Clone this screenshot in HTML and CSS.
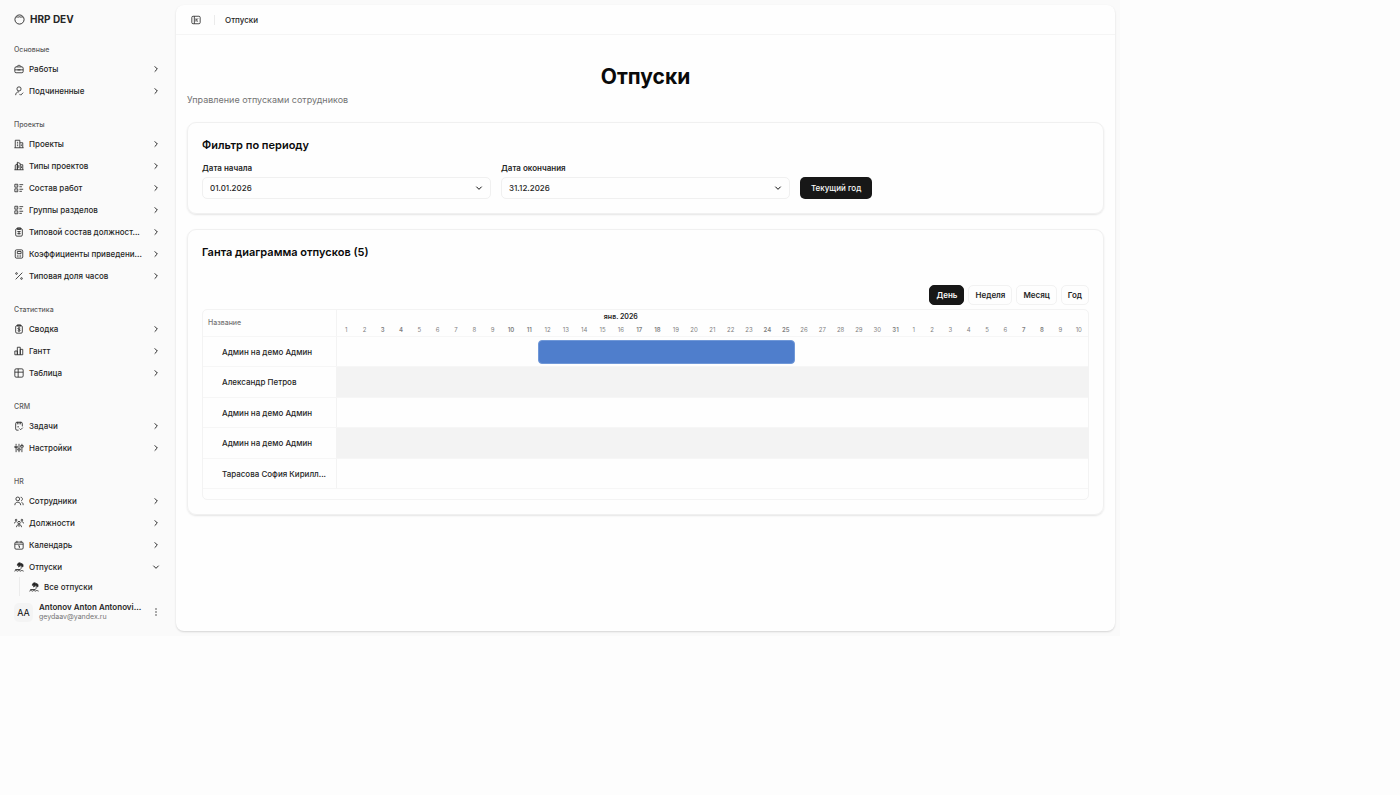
FILE: index.html
```html
<!DOCTYPE html>
<html lang="ru">
<head>
<meta charset="utf-8">
<title>Отпуски</title>
<link rel="stylesheet" href="styles.css">
</head>
<body>
<svg class="sprite" aria-hidden="true">
  <symbol id="i-logo" viewBox="0 0 24 24"><circle cx="12" cy="12" r="10"/><path d="M5 7c2.500-1.500 4 .8 7-1 3 1.800 4.500-.5 7 1"/></symbol>
  <symbol id="i-right" viewBox="0 0 24 24"><path d="M8 4l8 8-8 8"/></symbol>
  <symbol id="i-down" viewBox="0 0 24 24"><path d="M4 8l8 8 8-8"/></symbol>
  <symbol id="i-briefcase" viewBox="0 0 24 24"><rect x="2" y="7" width="20" height="14" rx="3"/><path d="M7 7c0-5 10-5 10 0M2 14h20M10 12v4M14 12v4"/></symbol>
  <symbol id="i-user" viewBox="0 0 24 24"><circle cx="12" cy="7" r="5"/><path d="M4 22c0-5 3-8 8-8M13 19l3 3 6-6"/></symbol>
  <symbol id="i-building" viewBox="0 0 24 24"><path d="M1 21h22M3 21V3h11v18M14 9h7v12M7 8h3M7 12h3M7 16h3M17.500 13v4"/></symbol>
  <symbol id="i-building2" viewBox="0 0 24 24"><path d="M1 21h22M3 21V10l5-3v14M8 21V3l7 3v15M15 9h6v12M11.500 10v7M18 13v4"/></symbol>
  <symbol id="i-list" viewBox="0 0 24 24"><path d="M2 3h7v7H2zM2 14h7v7H2zM13 4h9M13 9h6M13 15h9M13 20h6M5 6.500h1M5 17.500h1"/></symbol>
  <symbol id="i-clip" viewBox="0 0 24 24"><rect x="4" y="4" width="16" height="18" rx="3"/><path d="M8 2h8v4H8zM8 11h8M8 16h8M12 10v8"/></symbol>
  <symbol id="i-calc" viewBox="0 0 24 24"><rect x="3" y="2" width="18" height="20" rx="3"/><path d="M8 6h9v5H8zM7 15h2M11 15h2M15 15h2M7 18.500h2M11 18.500h2M15 18.500h2"/></symbol>
  <symbol id="i-percent" viewBox="0 0 24 24"><path d="M20 4L4 20"/><circle cx="6" cy="6" r="2"/><circle cx="18" cy="18" r="2"/></symbol>
  <symbol id="i-dollar" viewBox="0 0 24 24"><rect x="4" y="4" width="16" height="18" rx="3"/><path d="M8 2h8v3H8zM15 10c-1-1-6-1-6 1s6 1.500 6 4-5 2-6 1M12 8v11"/></symbol>
  <symbol id="i-chart" viewBox="0 0 24 24"><path d="M2 12h6v9H2zM8 3h7v18H8zM15 8h6v13h-6z"/></symbol>
  <symbol id="i-table" viewBox="0 0 24 24"><rect x="2" y="2" width="20" height="20" rx="3"/><path d="M2 10h20M10 2v20"/></symbol>
  <symbol id="i-task" viewBox="0 0 24 24"><path d="M11 22H7c-2 0-3-1-3-3V6c0-2 1-3 3-3h10c2 0 3 1 3 3v7M8 2v6M12 2v6M16 2v6M13 18l3 3 5-5M8 14h4"/></symbol>
  <symbol id="i-sliders" viewBox="0 0 24 24"><path d="M5 2v4M5 11v11M2 8h6v3H2zM12 2v11M12 18v4M9 14h6v3H9zM19 2v3M19 11v11M16 6h6v4h-6z"/></symbol>
  <symbol id="i-users" viewBox="0 0 24 24"><circle cx="9" cy="7" r="4.500"/><path d="M2 22c0-5 3-7 7-7s7 2 7 7M16 3c5 0 6 7 1 8.500M18 15c3 1 4 3 4 7"/></symbol>
  <symbol id="i-team" viewBox="0 0 24 24"><circle cx="12" cy="11" r="3"/><circle cx="5" cy="5" r="2"/><circle cx="19" cy="5" r="2"/><path d="M6 22c0-4 2-6 6-6s6 2 6 6M1 13c0-3 2-4 5-4M23 13c0-3-2-4-5-4M12 17v4"/></symbol>
  <symbol id="i-calendar" viewBox="0 0 24 24"><rect x="2" y="5" width="20" height="17" rx="3"/><path d="M2 10h20M7 2v5M17 2v5M10 14h3v5"/></symbol>
  <symbol id="i-beach" viewBox="0 0 24 24"><path d="M1 22c2-2 5-2 7 0 2-2 5-2 7 0 2-2 5-2 8 0M3 18h12c3-3 3-6 1-9"/><path class="solid" d="M8 8c0-6 6-8 9-4 4-1 6 4 4 8l-5-4-5 4c0-2 1-3 2-4z"/></symbol>
  <symbol id="i-panel" viewBox="0 0 24 24"><rect x="2" y="3" width="20" height="18" rx="3"/><path d="M8 3v18M12 8v8M17 8l-4 4 4 4"/></symbol>
  <symbol id="i-dots" viewBox="0 0 24 24"><path d="M12 1v4M12 10v4M12 19v4"/></symbol>
</svg>
<div class="app">
  <aside class="sidebar">
    <a class="brand" href="#"><svg class="logo"><use href="#i-logo"/></svg>HRP DEV</a>
    <nav class="nav">
      <section class="group">
        <h2 class="group-label">Основные</h2>
        <button class="item"><svg class="icon"><use href="#i-briefcase"/></svg><span class="item-text">Работы</span><svg class="chevron"><use href="#i-right"/></svg></button>
        <button class="item"><svg class="icon"><use href="#i-user"/></svg><span class="item-text">Подчиненные</span><svg class="chevron"><use href="#i-right"/></svg></button>
      </section>
      <section class="group">
        <h2 class="group-label">Проекты</h2>
        <button class="item"><svg class="icon"><use href="#i-building"/></svg><span class="item-text">Проекты</span><svg class="chevron"><use href="#i-right"/></svg></button>
        <button class="item"><svg class="icon"><use href="#i-building2"/></svg><span class="item-text">Типы проектов</span><svg class="chevron"><use href="#i-right"/></svg></button>
        <button class="item"><svg class="icon"><use href="#i-list"/></svg><span class="item-text">Состав работ</span><svg class="chevron"><use href="#i-right"/></svg></button>
        <button class="item"><svg class="icon"><use href="#i-list"/></svg><span class="item-text">Группы разделов</span><svg class="chevron"><use href="#i-right"/></svg></button>
        <button class="item"><svg class="icon"><use href="#i-clip"/></svg><span class="item-text">Типовой состав должност...</span><svg class="chevron"><use href="#i-right"/></svg></button>
        <button class="item"><svg class="icon"><use href="#i-calc"/></svg><span class="item-text">Коэффициенты приведени...</span><svg class="chevron"><use href="#i-right"/></svg></button>
        <button class="item"><svg class="icon"><use href="#i-percent"/></svg><span class="item-text">Типовая доля часов</span><svg class="chevron"><use href="#i-right"/></svg></button>
      </section>
      <section class="group">
        <h2 class="group-label">Статистика</h2>
        <button class="item"><svg class="icon"><use href="#i-dollar"/></svg><span class="item-text">Сводка</span><svg class="chevron"><use href="#i-right"/></svg></button>
        <button class="item"><svg class="icon"><use href="#i-chart"/></svg><span class="item-text">Гантт</span><svg class="chevron"><use href="#i-right"/></svg></button>
        <button class="item"><svg class="icon"><use href="#i-table"/></svg><span class="item-text">Таблица</span><svg class="chevron"><use href="#i-right"/></svg></button>
      </section>
      <section class="group">
        <h2 class="group-label">CRM</h2>
        <button class="item"><svg class="icon"><use href="#i-task"/></svg><span class="item-text">Задачи</span><svg class="chevron"><use href="#i-right"/></svg></button>
        <button class="item"><svg class="icon"><use href="#i-sliders"/></svg><span class="item-text">Настройки</span><svg class="chevron"><use href="#i-right"/></svg></button>
      </section>
      <section class="group">
        <h2 class="group-label">HR</h2>
        <button class="item"><svg class="icon"><use href="#i-users"/></svg><span class="item-text">Сотрудники</span><svg class="chevron"><use href="#i-right"/></svg></button>
        <button class="item"><svg class="icon"><use href="#i-team"/></svg><span class="item-text">Должности</span><svg class="chevron"><use href="#i-right"/></svg></button>
        <button class="item"><svg class="icon"><use href="#i-calendar"/></svg><span class="item-text">Календарь</span><svg class="chevron"><use href="#i-right"/></svg></button>
        <button class="item" aria-expanded="true"><svg class="icon"><use href="#i-beach"/></svg><span class="item-text">Отпуски</span><svg class="chevron"><use href="#i-down"/></svg></button>
        <div class="sub"><a class="sub-item" href="#"><svg class="icon"><use href="#i-beach"/></svg>Все отпуски</a></div>
      </section>
    </nav>
    <button class="user">
      <span class="avatar">AA</span>
      <span class="user-info"><span class="user-name">Antonov Anton Antonovi...</span><span class="user-mail">geydaav@yandex.ru</span></span>
      <svg class="chevron"><use href="#i-dots"/></svg>
    </button>
  </aside>
  <main class="main">
    <header class="topbar">
      <button class="toggle" aria-label="Свернуть меню"><svg class="icon"><use href="#i-panel"/></svg></button>
      <span class="divider"></span>
      <span>Отпуски</span>
    </header>
    <div class="content">
      <h1 class="title">Отпуски</h1>
      <p class="subtitle">Управление отпусками сотрудников</p>
      <section class="card">
        <h2 class="card-title">Фильтр по периоду</h2>
        <div class="filters">
          <div class="field">
            <label for="from">Дата начала</label>
            <div class="select"><select id="from"><option>01.01.2026</option></select><svg class="chevron"><use href="#i-down"/></svg></div>
          </div>
          <div class="field">
            <label for="to">Дата окончания</label>
            <div class="select"><select id="to"><option>31.12.2026</option></select><svg class="chevron"><use href="#i-down"/></svg></div>
          </div>
          <button class="primary">Текущий год</button>
        </div>
      </section>
      <section class="card">
        <h2 class="card-title">Ганта диаграмма отпусков (5)</h2>
        <div class="scales">
          <button class="scale active">День</button>
          <button class="scale">Неделя</button>
          <button class="scale">Месяц</button>
          <button class="scale">Год</button>
        </div>
        <div class="gantt">
          <table>
            <colgroup><col class="name-col"><col span="41"></colgroup>
            <thead>
              <tr class="months"><th class="name-head" rowspan="2">Название</th><th colspan="31">янв. 2026</th><th colspan="10"></th></tr>
              <tr class="days"><th>1</th><th>2</th><th class="off">3</th><th class="off">4</th><th>5</th><th>6</th><th>7</th><th>8</th><th>9</th><th class="off">10</th><th class="off">11</th><th>12</th><th>13</th><th>14</th><th>15</th><th>16</th><th class="off">17</th><th class="off">18</th><th>19</th><th>20</th><th>21</th><th>22</th><th>23</th><th class="off">24</th><th class="off">25</th><th>26</th><th>27</th><th>28</th><th>29</th><th>30</th><th class="off">31</th><th>1</th><th>2</th><th>3</th><th>4</th><th>5</th><th>6</th><th class="off">7</th><th class="off">8</th><th>9</th><th>10</th></tr>
            </thead>
            <tbody>
              <tr><th>Админ на демо Админ</th><td colspan="11"></td><td colspan="14"><div class="bar"></div></td><td colspan="16"></td></tr>
              <tr><th>Александр Петров</th><td colspan="41"></td></tr>
              <tr><th>Админ на демо Админ</th><td colspan="41"></td></tr>
              <tr><th>Админ на демо Админ</th><td colspan="41"></td></tr>
              <tr><th>Тарасова София Кирилл...</th><td colspan="41"></td></tr>
            </tbody>
          </table>
        </div>
      </section>
    </div>
  </main>
</div>
</body>
</html>
```
FILE: styles.css
```css
* { box-sizing: border-box; }
body {
  margin: 0;
  background: #fdfdfd;
  color: #0a0a0a;
  font: 8px/12px Inter, "Liberation Sans", sans-serif;
}
h1, h2, p { margin: 0; }
button, select { font: inherit; color: inherit; background: none; border: 0; padding: 0; }
a { color: inherit; text-decoration: none; }
svg { fill: none; stroke: currentColor; stroke-width: 2; flex: none; }
.sprite { display: none; }
.solid { fill: currentColor; }
.icon { width: 10px; height: 10px; }
.chevron { width: 8px; height: 8px; stroke-width: 3; }

.app {
  display: grid;
  grid-template-columns: 176px 1fr;
  width: 80vw;
  height: 80vh;
  background: #fafafa;
}

.sidebar { display: flex; flex-direction: column; min-height: 0; padding: 9px 16px 9px 14px; }
.brand { display: flex; align-items: center; gap: 5px; height: 20px; font-size: 10px; font-weight: 700; color: #262626; }
.logo { width: 11px; height: 11px; }
.nav { flex: 1; min-height: 0; overflow: hidden; padding-top: 11px; }
.group { padding-bottom: 14px; }
.group-label { height: 19px; font-size: 7px; font-weight: 500; line-height: 19px; color: #5c5c5c; }
.item { display: flex; align-items: center; gap: 5px; width: 100%; height: 20px; text-align: left; color: #262626; }
.item + .item { margin-top: 2px; }
.item-text { flex: 1; white-space: nowrap; }
.sub { margin-left: 5px; padding-left: 9px; border-left: 1px solid #ececec; }
.sub-item { display: flex; align-items: center; gap: 5px; height: 19px; color: #262626; }
.item, .sub-item { font-weight: 500; }
.user { display: flex; align-items: center; gap: 6px; height: 30px; text-align: left; }
.avatar { width: 19px; height: 19px; border-radius: 5px; background: #f4f4f4; font-size: 9px; line-height: 19px; text-align: center; }
.user-info { display: flex; flex: 1; flex-direction: column; min-width: 0; line-height: 10px; }
.user-name { white-space: nowrap; font-weight: 600; color: #262626; }
.user-mail { font-size: 7px; color: #737373; }

.main {
  min-width: 0;
  margin: 5px 5px 5px 0;
  border-radius: 8px;
  background: #fefefe;
  box-shadow: 0 1px 2px rgba(0, 0, 0, .15);
}
.topbar { display: flex; align-items: center; height: 30px; padding: 0 15px; border-bottom: 1px solid #f5f5f5; font-weight: 500; color: #262626; }
.toggle { display: flex; }
.divider { width: 1px; height: 10px; margin: 0 10px 0 13px; background: #ebebeb; }
.content { display: flex; flex-direction: column; gap: 15px; padding: 30px 11px; }
.title { font-size: 21px; line-height: 24px; font-weight: 700; text-align: center; }
.subtitle { margin-top: -11px; font-size: 9px; line-height: 14px; color: #737373; }
.card {
  padding: 14px;
  border: 1px solid #f0f0f0;
  border-radius: 9px;
  box-shadow: 0 1px 2px rgba(0, 0, 0, .1);
}
.card-title { font-size: 11px; line-height: 16px; font-weight: 600; }
.filters { display: grid; grid-template-columns: repeat(3, 1fr); align-items: end; gap: 10px; margin-top: 9px; }
.field label { display: block; margin-bottom: 3px; font-weight: 600; color: #262626; }
.select { display: grid; align-items: center; }
.select > * { grid-area: 1 / 1; }
.select select { appearance: none; width: 100%; height: 22px; padding: 0 7px; border: 1px solid #f0f0f0; border-radius: 5px; font-weight: 500; color: #262626; }
.select .chevron { justify-self: end; margin-right: 8px; pointer-events: none; }
.primary { justify-self: start; height: 22px; padding: 0 11px; border-radius: 5px; background: #171717; color: #fafafa; font-weight: 500; }

.scales { display: flex; justify-content: flex-end; gap: 4px; margin: 25px 0 4px; }
.scale { height: 20px; padding: 0 6px; border: 1px solid #f2f2f2; border-radius: 5px; font-weight: 600; color: #262626; }
.scale.active { border-color: #171717; background: #171717; color: #fafafa; }
.gantt { padding-bottom: 10px; border: 1px solid #f3f3f3; border-radius: 5px; }
table { width: 100%; border-spacing: 0; table-layout: fixed; }
.name-col { width: 134px; }
th, td { padding: 0; border-bottom: 1px solid #f6f6f6; font-weight: 500; }
.months th { height: 14px; border: 0; font-size: 7px; line-height: 14px; font-weight: 600; color: #262626; }
.months .name-head { padding-left: 5px; border-right: 1px solid #f3f3f3; border-bottom: 1px solid #f6f6f6; color: #737373; font-weight: 500; text-align: left; }
.days th { height: 13px; font-size: 6px; line-height: 12px; font-weight: 400; color: #808080; }
.days .off { font-weight: 600; }
tbody tr { height: 30px; }
tbody tr:nth-child(even) { height: 31px; }
tbody tr:nth-child(even) td { background: #f3f3f3; }
tbody th { padding: 0 0 0 19px; border-right: 1px solid #f3f3f3; text-align: left; white-space: nowrap; color: #262626; }
.bar { height: 24px; border: 1px solid #7098d8; border-radius: 4px; background: #4f7ecc; }
```
